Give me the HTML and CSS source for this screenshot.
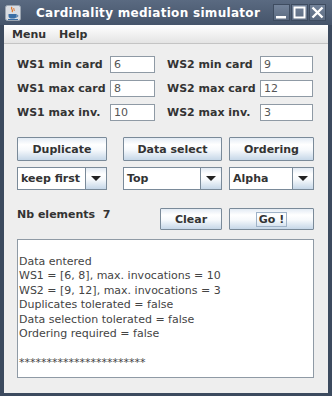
FILE: index.html
```html
<!DOCTYPE html>
<html lang="en">
<head>
    <meta charset="UTF-8">
    <title>Cardinality mediation simulator</title>
    <link rel="stylesheet" href="styles.css">
</head>
<body>
    <div class="window">
        <div class="titlebar">
            <svg class="appicon" width="16" height="16" viewBox="0 0 16 16">
                <rect x="0.5" y="0.5" width="15" height="15" rx="2" fill="#d9dde3" stroke="#9aa4b0"/>
                <path d="M7 2 C5 4 9 5 7 7" stroke="#e07020" stroke-width="1.2" fill="none"/>
                <path d="M9 3 C8 4 10 5 9 6" stroke="#e07020" stroke-width="1" fill="none"/>
                <path d="M3.5 9 H11.5 V11 C11.5 13 10 13.5 7.5 13.5 C5 13.5 3.5 13 3.5 11 Z" fill="#3a6ea5"/>
                <path d="M11.5 10 C13.5 10 13.5 12 11 12" stroke="#3a6ea5" stroke-width="1" fill="none"/>
                <rect x="3" y="14" width="10" height="1" fill="#3a6ea5"/>
            </svg>
            <span class="title">Cardinality mediation simulator</span>
            <div class="winbtns">
                <span class="wbtn">
                    <svg width="15" height="15" viewBox="0 0 15 15"><rect x="2" y="11" width="10" height="2.5" fill="#fff"/></svg>
                </span>
                <span class="wbtn">
                    <svg width="15" height="15" viewBox="0 0 15 15"><rect x="2.5" y="2.5" width="10" height="10" fill="none" stroke="#fff" stroke-width="2"/></svg>
                </span>
                <span class="wbtn">
                    <svg width="15" height="15" viewBox="0 0 15 15"><path d="M2.5 2.5 L12.5 12.5 M12.5 2.5 L2.5 12.5" stroke="#fff" stroke-width="2.4"/></svg>
                </span>
            </div>
        </div>

        <div class="menubar">
            <span>Menu</span>
            <span>Help</span>
        </div>

        <div class="content">
            <div class="params">
                <div class="label">WS1 min card</div>
                <div class="field">6</div>
                <div class="label second">WS2 min card</div>
                <div class="field">9</div>

                <div class="label">WS1 max card</div>
                <div class="field">8</div>
                <div class="label second">WS2 max card</div>
                <div class="field">12</div>

                <div class="label">WS1 max inv.</div>
                <div class="field">10</div>
                <div class="label second">WS2 max inv.</div>
                <div class="field">3</div>
            </div>

            <div class="choices">
                <div class="button col1">Duplicate</div>
                <div class="button col2">Data select</div>
                <div class="button col3">Ordering</div>

                <div class="combo col1"><span class="value">keep first</span><span class="arrow"></span></div>
                <div class="combo col2"><span class="value">Top</span><span class="arrow"></span></div>
                <div class="combo col3"><span class="value">Alpha</span><span class="arrow"></span></div>
            </div>

            <div class="run">
                <div class="nb col1">Nb elements&nbsp;&nbsp;7</div>
                <div class="button col2 clear">Clear</div>
                <div class="button col3"><span class="focus">Go !</span></div>
            </div>

            <div class="output">
Data entered
WS1 = [6, 8], max. invocations = 10
WS2 = [9, 12], max. invocations = 3
Duplicates tolerated = false
Data selection tolerated = false
Ordering required = false

***********************</div>
        </div>
    </div>
</body>
</html>
```

FILE: styles.css
```css
body { margin: 0; font-family: "DejaVu Sans", sans-serif; }
.window { width: 332px; height: 396px; box-sizing: border-box; display: flex; flex-direction: column; background: #eeeeee; border: solid #3c4a5e; border-width: 0 4px 3px 4px; }

.titlebar { height: 25px; margin: 0 -4px; display: flex; align-items: center; padding: 0 6px 0 5px; background: linear-gradient(#5a6a81, #45546a); color: white; }
.appicon { flex: none; }
.title { margin-left: 15px; font-weight: bold; font-size: 12px; letter-spacing: 0.3px; white-space: nowrap; }
.winbtns { margin-left: auto; display: flex; gap: 1px; }
.wbtn { width: 17px; height: 17px; box-sizing: border-box; display: flex; align-items: center; justify-content: center; background: linear-gradient(#73839a, #5b6a80); border: 1px solid #3e4c60; }

.menubar { height: 18px; display: flex; align-items: center; gap: 13px; padding-left: 8px; background: linear-gradient(#ffffff, #e4e4e4); border-bottom: 1px solid #c4c4c4; font-size: 11px; font-weight: bold; color: #333; }

.content { flex: 1; display: flex; flex-direction: column; padding: 12px 14px 15px 13px; font-size: 11px; color: #333; }

.params { display: grid; grid-template-columns: 93px 45px 105px 53px; grid-auto-rows: 17px; row-gap: 7px; }
.label { font-weight: bold; display: flex; align-items: center; white-space: nowrap; }
.label.second { padding-left: 12px; }
.field { background: white; border: 1px solid #8f9aa5; padding-left: 3px; display: flex; align-items: center; color: #555; font-size: 11px; }

.choices, .run { display: grid; grid-template-columns: 90px 16px 99px 7px 85px; }
.choices { margin-top: 16px; grid-template-rows: 24px 23px; row-gap: 6px; }
.col1 { grid-column: 1; }
.col2 { grid-column: 3; }
.col3 { grid-column: 5; }

.button { box-sizing: border-box; border: 1px solid #7a8a99; border-radius: 1px; background: linear-gradient(#e3ebf4, #ffffff 30%, #f6f9fc 55%, #c6d7e8); display: flex; align-items: center; justify-content: center; font-weight: bold; color: #333; }
.combo { box-sizing: border-box; border: 1px solid #7a8a99; background: white; display: flex; font-weight: bold; }
.combo .value { flex: 1; display: flex; align-items: center; padding-left: 3px; }
.combo .arrow { width: 20px; border-left: 1px solid #7a8a99; background: linear-gradient(#e3ebf4, #ffffff 30%, #f6f9fc 55%, #c6d7e8); display: flex; align-items: center; justify-content: center; }
.combo .arrow::after { content: ""; border-style: solid; border-width: 5px 5px 0 5px; border-color: #222 transparent transparent transparent; }

.run { margin-top: 18px; grid-template-rows: 22px; }
.nb { grid-column: 1 / 3; font-weight: bold; white-space: nowrap; line-height: 14px; }
.clear { width: 62px; justify-self: end; }
.focus { border: 1px solid #9fb3c8; padding: 0 2px; line-height: 13px; }

.output { margin-top: 9px; flex: 1; background: white; border: 1px solid #8f9aa5; padding-left: 1px; white-space: pre; line-height: 14.5px; font-size: 11px; color: #444; overflow: hidden; }
```
